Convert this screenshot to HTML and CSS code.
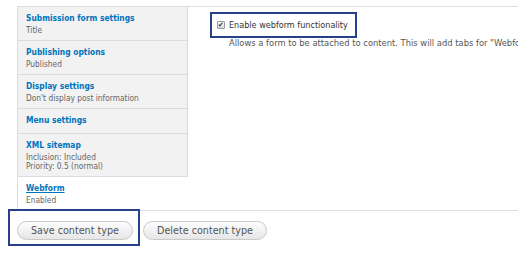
FILE: index.html
```html
<!DOCTYPE html>
<html lang="en">
<head>
    <meta charset="UTF-8">
    <meta name="viewport" content="width=device-width, initial-scale=1.0">
    <title>Content type - Webform</title>
    <link rel="stylesheet" href="styles.css">
</head>
<body>
    <div class="vertical-tabs">
        <ul class="tab-list">
            <li class="tab">
                <a href="#" class="tab-title">Submission form settings</a>
                <span class="summary">Title</span>
            </li>
            <li class="tab">
                <a href="#" class="tab-title">Publishing options</a>
                <span class="summary">Published</span>
            </li>
            <li class="tab">
                <a href="#" class="tab-title">Display settings</a>
                <span class="summary">Don't display post information</span>
            </li>
            <li class="tab">
                <a href="#" class="tab-title">Menu settings</a>
            </li>
            <li class="tab">
                <a href="#" class="tab-title">XML sitemap</a>
                <span class="summary">Inclusion: Included<br>Priority: 0.5 (normal)</span>
            </li>
            <li class="tab selected">
                <a href="#" class="tab-title">Webform</a>
                <span class="summary">Enabled</span>
            </li>
        </ul>

        <div class="tab-pane">
            <label class="check-label" for="webformEnabled">
                <input type="checkbox" id="webformEnabled" checked>
                Enable webform functionality
            </label>
            <div class="description">Allows a form to be attached to content. This will add tabs for "Webform" and "Results" on all content of this type.</div>
        </div>
    </div>

    <div class="actions">
        <button type="submit" class="button">Save content type</button>
        <button type="submit" class="button">Delete content type</button>
    </div>

    <!-- highlight boxes drawn over the screenshot -->
    <div class="highlight highlight-check"></div>
    <div class="highlight highlight-save"></div>
</body>
</html>
```

FILE: styles.css
```css
body {
    margin: 0;
    font-family: "DejaVu Sans Condensed", "DejaVu Sans", sans-serif;
    background-color: #fff;
    color: #333;
    overflow: hidden;
}

.vertical-tabs {
    display: flex;
    margin: 6px 0 0 17px;
    border-top: 1px solid #ddd;
    border-bottom: 1px solid #ddd;
    border-left: 1px solid #ddd;
}

.tab-list {
    width: 169px;
    margin: 0;
    padding: 0;
    list-style: none;
    background-color: #f2f2f2;
    border-right: 1px solid #d9d9d9;
    display: flex;
    flex-direction: column;
}

.tab {
    padding: 3px 8px 5px;
    border-bottom: 1px solid #dcdcdc;
}

.tab.selected {
    flex: 1;
    background-color: #fff;
    border-bottom: none;
    margin-right: -1px;
}

.tab-title {
    display: block;
    font-size: 8.4px;
    line-height: 16px;
    font-weight: bold;
    color: #0074bd;
    text-decoration: none;
}

.selected .tab-title {
    text-decoration: underline;
}

.summary {
    display: block;
    font-size: 8.3px;
    line-height: 9px;
    color: #666;
}

.tab-pane {
    flex: 1;
    min-width: 0;
    padding: 12px 0 0 29px;
    white-space: nowrap;
    overflow: hidden;
}

.check-label {
    display: flex;
    align-items: center;
    gap: 4px;
    font-size: 9px;
    line-height: 12px;
    color: #333;
}

.check-label input {
    appearance: none;
    margin: 0;
    width: 8px;
    height: 8px;
    border: 1px solid #9a9a9a;
    border-radius: 1px;
    background: linear-gradient(#fff, #d8d8d8);
    position: relative;
}

.check-label input:checked::before {
    content: "\2714";
    position: absolute;
    left: 0;
    top: -2px;
    font-size: 7px;
    line-height: 10px;
    color: #333;
}

.description {
    margin: 6px 0 0 12px;
    font-size: 9.3px;
    line-height: 12px;
    color: #555;
}

.actions {
    display: flex;
    gap: 10px;
    margin-top: 10px;
    padding-left: 17px;
}

.button {
    height: 19px;
    padding: 0 13px;
    font-family: inherit;
    font-size: 10.7px;
    color: #555;
    background: linear-gradient(#fdfdfd, #e6e6e6);
    border: 1px solid #c9c9c9;
    border-radius: 10px;
    cursor: pointer;
}

.highlight {
    position: absolute;
    border: 2px solid #26418a;
}

.highlight-check {
    left: 210px;
    top: 12px;
    width: 143px;
    height: 22px;
}

.highlight-save {
    left: 8px;
    top: 209px;
    width: 128px;
    height: 33px;
}
```
